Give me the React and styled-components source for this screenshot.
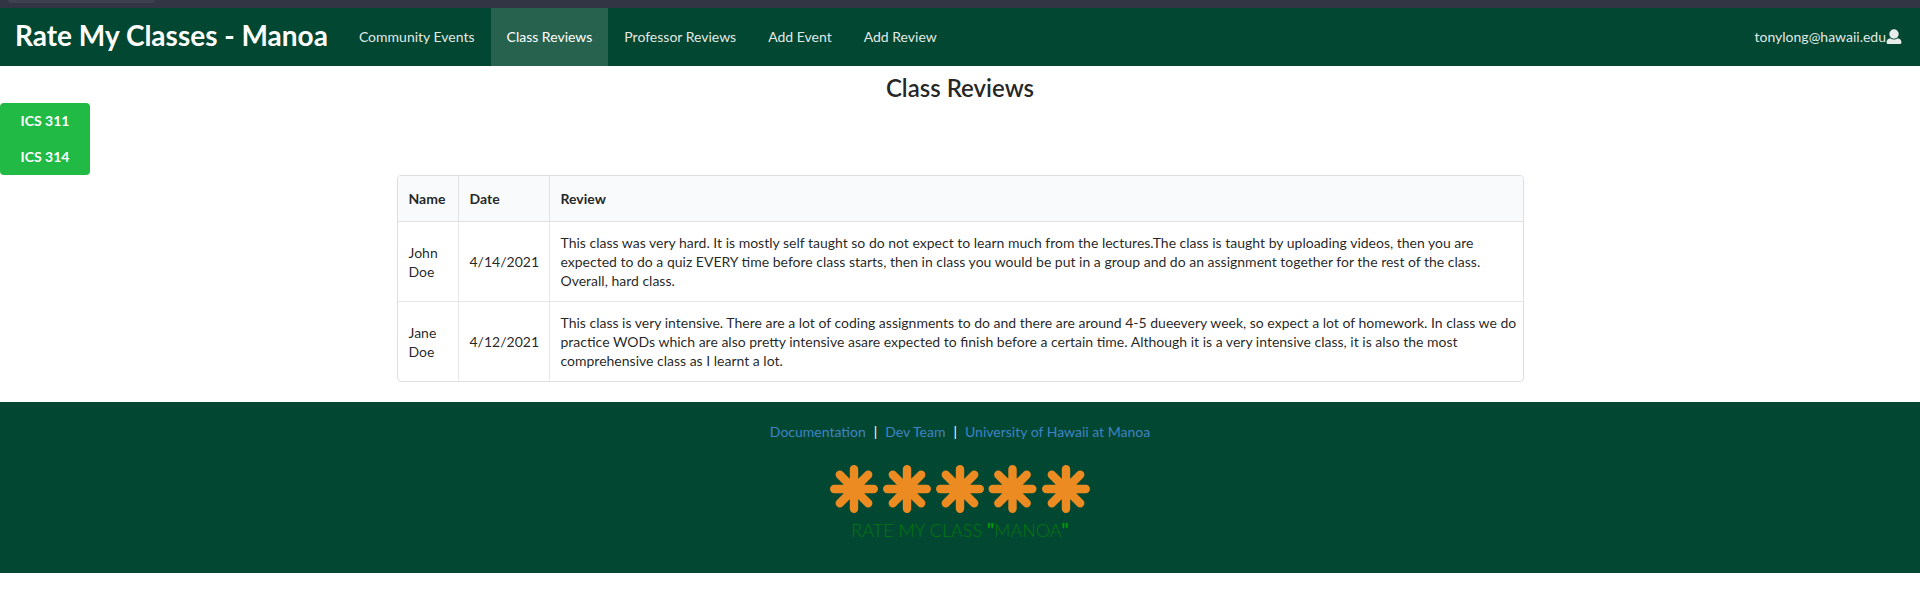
import React from "react";
import styled, { createGlobalStyle } from "styled-components";

const GlobalStyle = createGlobalStyle`
  *, *::before, *::after { box-sizing: border-box; }
  body {
    margin: 0;
    background: #fff;
    color: rgba(0, 0, 0, 0.87);
    font-family: Lato, "Liberation Sans", Arial, sans-serif;
    font-size: 14px;
    line-height: 20px;
  }
`;

const BrowserStrip = styled.div`
  height: 8px;
  padding-left: 8px;
  background: #323544;
`;

const BrowserTab = styled.div`
  width: 147px;
  height: 3px;
  border-radius: 0 0 3px 3px;
  background: #3e4150;
`;

const NavBar = styled.nav`
  display: flex;
  align-items: stretch;
  min-height: 58px;
  background: #024731;
`;

const NavLink = styled.a`
  display: flex;
  align-items: center;
  padding: 0 16px;
  color: ${(p) => (p.$active ? "#fff" : "rgba(255, 255, 255, 0.9)")};
  background: ${(p) => (p.$active ? "rgba(255, 255, 255, 0.15)" : "transparent")};
  text-decoration: none;
`;

const Brand = styled(NavLink)`
  padding: 0 15px 4px;
  color: #fff;
  font-size: 28px;
  font-weight: 700;
  line-height: 36px;
`;

const UserButton = styled.button`
  display: flex;
  align-items: center;
  margin-left: auto;
  padding: 0 18px 0 16px;
  border: 0;
  background: none;
  color: rgba(255, 255, 255, 0.9);
  font: inherit;
`;

const Title = styled.h2`
  margin: 0;
  padding: 9px 0 3px;
  font-size: 24px;
  font-weight: 600;
  line-height: 25px;
  text-align: center;
`;

const ButtonGroup = styled.div`
  display: inline-flex;
  flex-direction: column;
  vertical-align: top;
  min-width: 90px;
  overflow: hidden;
  border-radius: 4px;
`;

const ClassButton = styled.button`
  height: 36px;
  padding: 0 20px;
  border: 0;
  background: #21ba45;
  color: #fff;
  font: inherit;
  font-weight: 700;
`;

const Container = styled.div`
  width: 100%;
  max-width: 1127px;
  margin: 0 auto;
`;

const Table = styled.table`
  width: 100%;
  border: 1px solid #dededf;
  border-radius: 4px;
  border-collapse: separate;
  border-spacing: 0;
  overflow: hidden;
  line-height: 19px;
`;

const HeadCell = styled.th`
  width: ${(p) => p.$width || "auto"};
  padding: 13px 11px;
  border-bottom: 1px solid #e1e2e3;
  background: #f9fafb;
  font-weight: 700;
  text-align: left;

  & + & { border-left: 1px solid #e1e2e3; }
`;

const Cell = styled.td`
  padding: 11px 2px 11px 11px;
  vertical-align: middle;

  & + & { border-left: 1px solid #e7e7e8; }
  tr + tr > & { border-top: 1px solid #e7e7e8; }
`;

const Footer = styled.footer`
  display: flex;
  flex-direction: column;
  align-items: center;
  margin-top: 20px;
  padding: 20px 0 27px;
  background: #024731;
`;

const FooterLinks = styled.div`
  display: flex;
  gap: 8px;
  color: #fff;
`;

const FooterLink = styled.a`
  color: #4183c4;
  text-decoration: none;
`;

const Logo = styled.div`
  display: flex;
  flex-direction: column;
  align-items: center;
  margin-top: 22px;
`;

const LogoText = styled.div`
  color: #03780f;
  font-size: 18px;
  font-weight: 300;
  line-height: 32px;
`;

const LogoQuote = styled.span`
  color: #039a06;
  font-weight: 700;
`;

const navLinks = ["Community Events", "Class Reviews", "Professor Reviews", "Add Event", "Add Review"];

const classes = ["ICS 311", "ICS 314"];

const reviews = [
  {
    name: "John Doe",
    date: "4/14/2021",
    review:
      "This class was very hard. It is mostly self taught so do not expect to learn much from the lectures.The class is taught by uploading videos, then you are expected to do a quiz EVERY time before class starts, then in class you would be put in a group and do an assignment together for the rest of the class. Overall, hard class.",
  },
  {
    name: "Jane Doe",
    date: "4/12/2021",
    review:
      "This class is very intensive. There are a lot of coding assignments to do and there are around 4-5 dueevery week, so expect a lot of homework. In class we do practice WODs which are also pretty intensive asare expected to finish before a certain time. Although it is a very intensive class, it is also the most comprehensive class as I learnt a lot.",
  },
];

const footerLinks = ["Documentation", "Dev Team", "University of Hawaii at Manoa"];

function UserIcon() {
  return (
    <svg width="16" height="16" viewBox="0 0 16 16" fill="currentColor" aria-hidden="true">
      <circle cx="8" cy="5" r="4.7" />
      <path d="M4.2 9.2C2 9.6.6 11 .6 13v.8c0 .7.5 1.2 1.2 1.2h12.4c.7 0 1.2-.5 1.2-1.2V13c0-2-1.4-3.4-3.6-3.8-2.2 1.7-5.4 1.7-7.6 0z" />
    </svg>
  );
}

function LogoStars() {
  return (
    <svg width="262" height="50" viewBox="0 0 262 50" stroke="#ed8b23" strokeWidth="8.4" strokeLinecap="round" aria-hidden="true">
      {[25, 78, 131, 183.5, 237].map((x) => (
        <path
          key={x}
          d={`M${x} 5.2V44.8M${x - 19.8} 25H${x + 19.8}M${x - 14.2} 10.8L${x + 14.2} 39.2M${x + 14.2} 10.8L${x - 14.2} 39.2`}
        />
      ))}
    </svg>
  );
}

export default function App() {
  return (
    <>
      <GlobalStyle />
      <BrowserStrip>
        <BrowserTab />
      </BrowserStrip>
      <NavBar>
        <Brand href="#">Rate My Classes - Manoa</Brand>
        {navLinks.map((label) => (
          <NavLink key={label} href="#" $active={label === "Class Reviews"}>
            {label}
          </NavLink>
        ))}
        <UserButton type="button">
          tonylong@hawaii.edu
          <UserIcon />
        </UserButton>
      </NavBar>
      <main>
        <Title>Class Reviews</Title>
        <ButtonGroup>
          {classes.map((name) => (
            <ClassButton key={name} type="button">
              {name}
            </ClassButton>
          ))}
        </ButtonGroup>
        <Container>
          <Table>
            <thead>
              <tr>
                <HeadCell scope="col" $width="60px">Name</HeadCell>
                <HeadCell scope="col" $width="91px">Date</HeadCell>
                <HeadCell scope="col">Review</HeadCell>
              </tr>
            </thead>
            <tbody>
              {reviews.map((r) => (
                <tr key={r.name}>
                  <Cell>{r.name}</Cell>
                  <Cell>{r.date}</Cell>
                  <Cell>{r.review}</Cell>
                </tr>
              ))}
            </tbody>
          </Table>
        </Container>
      </main>
      <Footer>
        <FooterLinks>
          {footerLinks.map((label, i) => (
            <React.Fragment key={label}>
              {i > 0 && <span>|</span>}
              <FooterLink href="#">{label}</FooterLink>
            </React.Fragment>
          ))}
        </FooterLinks>
        <Logo>
          <LogoStars />
          <LogoText>
            RATE MY CLASS <LogoQuote>"</LogoQuote>MANOA<LogoQuote>"</LogoQuote>
          </LogoText>
        </Logo>
      </Footer>
    </>
  );
}
